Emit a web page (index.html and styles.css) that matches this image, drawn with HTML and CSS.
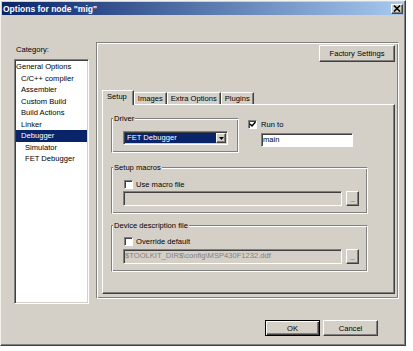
FILE: index.html
```html
<!DOCTYPE html>
<html lang="en">
<head>
  <meta charset="UTF-8" />
  <title>Options for node "mig"</title>
  <link rel="stylesheet" href="styles.css">
</head>
<body>
  <div class="window">
    <div class="titlebar">
      <span class="title">Options for node "mig"</span>
      <span class="close">
        <svg width="8" height="7" viewBox="0 0 8 7"><path d="M1 0.5 L7 6.5 M7 0.5 L1 6.5" stroke="#000" stroke-width="1.6" fill="none"/></svg>
      </span>
    </div>
    <div class="client">
      <div class="main">
        <div class="category">
          <div class="cat-label">Category:</div>
          <ul class="tree">
            <li>General Options</li>
            <li class="lvl1">C/C++ compiler</li>
            <li class="lvl1">Assembler</li>
            <li class="lvl1">Custom Build</li>
            <li class="lvl1">Build Actions</li>
            <li class="lvl1">Linker</li>
            <li class="lvl1 selected">Debugger</li>
            <li class="lvl2">Simulator</li>
            <li class="lvl2">FET Debugger</li>
          </ul>
        </div>
        <div class="frame">
          <div class="factory-row">
            <button class="btn factory">Factory Settings</button>
          </div>
          <div class="tabs">
            <span class="tab active">Setup</span>
            <span class="tab">Images</span>
            <span class="tab">Extra Options</span>
            <span class="tab">Plugins</span>
          </div>
          <div class="tab-panel">
            <div class="top-row">
              <fieldset class="group driver">
                <legend>Driver</legend>
                <div class="group-body driver-body">
                  <div class="combo">
                    <span class="combo-value">FET Debugger</span>
                    <span class="combo-btn">
                      <svg width="5" height="3" viewBox="0 0 5 3"><path d="M0 0 H5 L2.5 3 Z" fill="#000"/></svg>
                    </span>
                  </div>
                </div>
              </fieldset>
              <div class="runto">
                <div class="check-row">
                  <span class="check">
                    <svg width="7" height="7" viewBox="0 0 7 7"><path d="M1 3 L3 5 L6.5 1" stroke="#000" stroke-width="1.5" fill="none"/></svg>
                  </span>
                  <span>Run to</span>
                </div>
                <div class="input">main</div>
              </div>
            </div>
            <fieldset class="group wide macros">
              <legend>Setup macros</legend>
              <div class="group-body">
                <div class="check-row">
                  <span class="check"></span>
                  <span>Use macro file</span>
                </div>
                <div class="file-row">
                  <div class="field"></div>
                  <button class="btn browse">...</button>
                </div>
              </div>
            </fieldset>
            <fieldset class="group wide device">
              <legend>Device description file</legend>
              <div class="group-body">
                <div class="check-row">
                  <span class="check"></span>
                  <span>Override default</span>
                </div>
                <div class="file-row device-row">
                  <div class="field">$TOOLKIT_DIR$\config\MSP430F1232.ddf</div>
                  <button class="btn browse">...</button>
                </div>
              </div>
            </fieldset>
          </div>
        </div>
      </div>
      <div class="footer">
        <button class="btn dialog default">OK</button>
        <button class="btn dialog">Cancel</button>
      </div>
    </div>
  </div>
</body>
</html>
```

FILE: styles.css
```css
body {
  margin: 0;
  background: #fff;
  font-family: "Liberation Sans", Arial, sans-serif;
  font-size: 7.6px;
  color: #000;
}
.window {
  width: 406px;
  height: 346px;
  box-sizing: border-box;
  background: #d4d0c8;
  border: 1px solid;
  border-color: #f4f3ee #404040 #404040 #f4f3ee;
  box-shadow: inset -1px -1px 0 #808080;
  padding: 1px;
  display: flex;
  flex-direction: column;
}
.titlebar {
  height: 13px;
  display: flex;
  align-items: center;
  justify-content: space-between;
  padding: 0 1px 0 1px;
  background: linear-gradient(to right, #0a246a, #a6caf0);
}
.title {
  color: #fff;
  font-weight: bold;
  font-size: 8.5px;
}
.close {
  width: 12px;
  height: 10px;
  box-sizing: border-box;
  background: #d4d0c8;
  border: 1px solid;
  border-color: #fff #404040 #404040 #fff;
  box-shadow: inset -1px -1px 0 #808080;
  display: flex;
  align-items: center;
  justify-content: center;
}
.close svg {
  display: block;
}
.client {
  flex: 1;
  padding: 27px 0 0 12px;
}
.main {
  display: flex;
  gap: 7px;
}
.category {
  width: 75px;
}
.cat-label {
  line-height: 9px;
  margin: 3px 0 5px 2px;
}
.tree {
  height: 245px;
  box-sizing: border-box;
  margin: 0;
  padding: 1px;
  list-style: none;
  background: #fff;
  border: 1px solid;
  border-color: #808080 #fff #fff #808080;
  box-shadow: inset 1px 1px 0 #404040, inset -1px -1px 0 #d4d0c8;
}
.tree li {
  line-height: 11.5px;
  height: 11.5px;
  white-space: nowrap;
}
.tree .lvl1 {
  padding-left: 5px;
}
.tree .lvl2 {
  padding-left: 9px;
}
.tree .selected {
  background: #0a246a;
  color: #fff;
}
/* etched frame: grey outer line top/left, white outer line bottom/right */
.frame {
  width: 303px;
  height: 257px;
  box-sizing: border-box;
  border: 1px solid;
  border-color: #808080 #fff #fff #808080;
  box-shadow: inset 1px 1px 0 #fff, inset -1px -1px 0 #808080;
  padding: 2px 3px 4px 5px;
  display: flex;
  flex-direction: column;
}
.factory-row {
  display: flex;
  justify-content: flex-end;
}
.btn {
  font-family: inherit;
  font-size: 7.6px;
  color: #000;
  padding: 0;
  margin: 0;
  box-sizing: border-box;
  background: #d4d0c8;
  border: 1px solid;
  border-color: #fff #404040 #404040 #fff;
  box-shadow: inset -1px -1px 0 #808080;
}
.factory {
  width: 76px;
  height: 17px;
}
.tabs {
  display: flex;
  align-items: flex-end;
  height: 14px;
  margin-top: 28px;
  position: relative;
  z-index: 1;
}
.tab {
  height: 12px;
  line-height: 11px;
  box-sizing: border-box;
  padding: 0 3px;
  border-top: 1px solid #fff;
  border-left: 1px solid #fff;
  border-right: 1px solid #404040;
  box-shadow: inset -1px 0 0 #808080;
  white-space: nowrap;
}
.tab.active {
  height: 15px;
  line-height: 12px;
  margin-bottom: -1px;
  padding: 0 6px 0 4px;
  background: #d4d0c8;
}
.tab-panel {
  height: 190px;
  box-sizing: border-box;
  border: 1px solid;
  border-color: #fff #404040 #404040 #fff;
  box-shadow: inset -1px -1px 0 #808080;
  padding: 9px 0 0 8px;
}
.top-row {
  display: flex;
}
.group {
  margin: 0;
  padding: 0;
  min-width: 0;
  border: 1px solid;
  border-color: #808080 #fff #fff #808080;
  box-shadow: inset 1px 1px 0 #fff, inset -1px -1px 0 #808080;
  box-sizing: border-box;
}
.group legend {
  padding: 0 1px;
  margin: 0 0 0 1px;
  line-height: 9px;
  background: #d4d0c8;
}
.driver {
  width: 128px;
}
.driver-body {
  padding: 10px 0 6px 12px;
}
.combo {
  display: flex;
  width: 105px;
  height: 14px;
  box-sizing: border-box;
  padding: 1px;
  background: #fff;
  border: 1px solid;
  border-color: #808080 #fff #fff #808080;
  box-shadow: inset 1px 1px 0 #404040, inset -1px -1px 0 #d4d0c8;
}
.combo-value {
  flex: 1;
  background: #0a246a;
  color: #fff;
  line-height: 10px;
  padding-left: 2px;
}
.combo-btn {
  width: 10px;
  box-sizing: border-box;
  background: #d4d0c8;
  border: 1px solid;
  border-color: #fff #404040 #404040 #fff;
  box-shadow: inset -1px -1px 0 #808080;
  display: flex;
  align-items: center;
  justify-content: center;
}
.combo-btn svg {
  display: block;
}
.runto {
  margin-left: 9px;
  padding-top: 6px;
}
.check-row {
  display: flex;
  align-items: center;
  gap: 4px;
  height: 9px;
  line-height: 9px;
}
.check {
  width: 9px;
  height: 9px;
  box-sizing: border-box;
  background: #fff;
  border: 1px solid;
  border-color: #808080 #fff #fff #808080;
  box-shadow: inset 1px 1px 0 #404040;
  display: flex;
  align-items: center;
  justify-content: center;
}
.check svg {
  display: block;
}
.input {
  width: 92px;
  height: 14px;
  box-sizing: border-box;
  margin: 4px 0 0 13px;
  padding-left: 1px;
  line-height: 11px;
  background: #fff;
  border: 1px solid;
  border-color: #808080 #fff #fff #808080;
  box-shadow: inset 1px 1px 0 #404040;
}
.wide {
  width: 257px;
}
.macros {
  margin-top: 10px;
}
.device {
  margin-top: 7px;
}
.group-body {
  padding: 8px 0 7px 11px;
}
.group-body .check-row {
  margin-left: 1px;
  gap: 3px;
}
.device .group-body {
  padding-top: 7px;
}
.file-row {
  display: flex;
  gap: 4px;
  margin-top: 2px;
}
.device-row {
  margin-top: 3px;
}
.field {
  width: 219px;
  height: 15px;
  box-sizing: border-box;
  padding: 0 1px;
  line-height: 12px;
  color: #808080;
  background: #d4d0c8;
  white-space: nowrap;
  overflow: hidden;
  border: 1px solid;
  border-color: #808080 #fff #fff #808080;
  box-shadow: inset 1px 1px 0 #404040;
}
.browse {
  width: 13px;
  height: 15px;
  line-height: 17px;
  font-size: 6px;
  overflow: hidden;
}
.footer {
  display: flex;
  justify-content: flex-end;
  gap: 3px;
  margin-top: 16px;
  padding-right: 26px;
}
.dialog {
  width: 55px;
  height: 16px;
}
.dialog.default {
  border: 1px solid #000;
  box-shadow: inset 1px 1px 0 #fff, inset -1px -1px 0 #404040, inset -2px -2px 0 #808080;
}
```
